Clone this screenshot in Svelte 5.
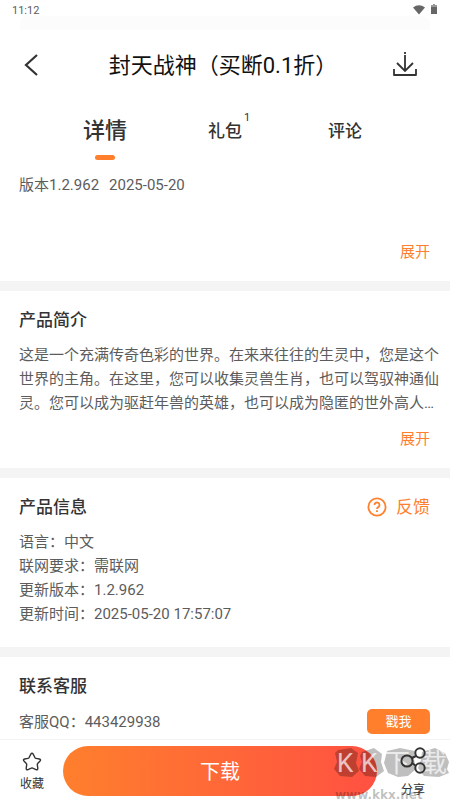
<script lang="ts">
	let activeTab = $state('detail');
	let favorite = $state(false);

	const tabs = [
		{ id: 'detail', label: '详情', count: 0 },
		{ id: 'gift', label: '礼包', count: 1 },
		{ id: 'comment', label: '评论', count: 0 }
	];

	const info = [
		{ name: '语言', value: '中文' },
		{ name: '联网要求', value: '需联网' },
		{ name: '更新版本', value: '1.2.962' },
		{ name: '更新时间', value: '2025-05-20 17:57:07' }
	];
</script>

<svelte:head>
	<title>封天战神（买断0.1折）</title>
</svelte:head>

<div class="page">
	<div class="status">
		<span>11:12</span>
		<span class="status-icons">
			<svg width="14" height="12" viewBox="0 0 14 12">
				<path d="M1 3.500Q7-1 13 3.500L7 10.500Z" fill="#666" />
			</svg>
			<svg width="8" height="12" viewBox="0 0 8 12">
				<path d="M1 3h6v7H1z" fill="#666" />
				<path d="M3 0h2v1h2v2H1V1h2z" fill="#999" />
			</svg>
		</span>
	</div>
	<div class="strip"></div>

	<header>
		<button class="icon-btn" aria-label="返回">
			<svg width="24" height="24" viewBox="0 0 24 24" fill="none" stroke="#333" stroke-width="2.200">
				<path d="M17 2 6 12l11 10" />
			</svg>
		</button>
		<h1>封天战神（买断0.1折）</h1>
		<button class="icon-btn" aria-label="下载管理">
			<svg width="26" height="26" viewBox="0 0 26 26" fill="none" stroke="#333" stroke-width="1.800">
				<path d="M13 0v2M13 3v16M5 11l8 8 8-8" />
				<path d="M2 17v6h22v-6" stroke-linejoin="round" />
			</svg>
		</button>
	</header>

	<nav>
		{#each tabs as tab}
			<button
				class="tab"
				class:active={activeTab === tab.id}
				onclick={() => (activeTab = tab.id)}
			>
				<span class="tab-label">
					{tab.label}
					{#if tab.count}<span class="count">{tab.count}</span>{/if}
				</span>
			</button>
		{/each}
	</nav>

	<section class="version">
		<p><span>版本1.2.962</span><span>2025-05-20</span></p>
		<button class="more">展开</button>
	</section>

	<section class="intro">
		<h2>产品简介</h2>
		<p>
			这是一个充满传奇色彩的世界。在来来往往的生灵中，您是这个世界的主角。在这里，您可以收集灵兽生肖，也可以驾驭神通仙灵。您可以成为驱赶年兽的英雄，也可以成为隐匿的世外高人…
		</p>
		<button class="more">展开</button>
	</section>

	<section class="info">
		<div class="row">
			<h2>产品信息</h2>
			<button class="feedback">
				<svg width="20" height="20" viewBox="0 0 20 20" fill="none" stroke="#ff7f2d">
					<circle cx="10" cy="10" r="8.600" stroke-width="1.800" />
					<path d="M7.500 8a2.500 2.500 0 1 1 4 2c-1 .7-1.500 1-1.500 2" stroke-width="1.800" />
					<path d="M10 13.200v1.900" stroke-width="1.900" />
				</svg>
				反馈
			</button>
		</div>
		<ul>
			{#each info as item}
				<li>{item.name}：{item.value}</li>
			{/each}
		</ul>
	</section>

	<section class="contact">
		<h2>联系客服</h2>
		<div class="row">
			<p>客服QQ：443429938</p>
			<button class="poke">戳我</button>
		</div>
	</section>

	<footer>
		<button class="action" aria-pressed={favorite} onclick={() => (favorite = !favorite)}>
			<svg width="20" height="20" viewBox="0 0 20 20" fill={favorite ? '#ff7f2d' : 'none'}>
				<path
					d="M8.8 2.2Q10 .4 11.2 2.2L13 5.7Q13.3 6.3 14 6.4L17.4 7Q19.3 7.5 18 9L15.7 11.5Q15.2 12 15.3 12.7L15.8 16.2Q15.9 18.4 13.9 17.6L10.8 16.2Q10 15.8 9.2 16.2L6.1 17.6Q4.1 18.4 4.2 16.2L4.7 12.7Q4.8 12 4.3 11.5L2 9Q.7 7.5 2.6 7L6 6.4Q6.7 6.3 7 5.700Z"
					stroke="#333"
					stroke-width="1.400"
				/>
			</svg>
			收藏
		</button>
		<button class="download">下载</button>
		<button class="action share">
			<svg width="28" height="28" viewBox="0 0 28 28" fill="none" stroke="#333" stroke-width="2">
				<path d="m13 11 4-2M13 16l4 3" />
				<circle cx="8" cy="14" r="5.600" />
				<circle cx="21" cy="6" r="4.700" />
				<circle cx="21" cy="21" r="4.700" />
			</svg>
			分享
		</button>
		<svg class="mark" width="117" height="55" viewBox="0 0 117 55">
			<g fill="#000" fill-opacity=".25">
				<path d="M5 4 18 2l7 5-2 10 3 8-7 6-12-1-6-7 3-7-2-9z" />
				<path d="m29 6 12-4 8 6-1 8 3 9-8 6-11-1-6-7 3-7-2-6z" />
				<path d="m54 5 13-3 15 3-1 8 2 10-8 7-10 1-10-4-4-10z" />
				<path d="m89 6 13-4 10 5 4 9-2 7 2 4-10 4-15-1-6-8 3-8z" />
			</g>
			<g class="mark-name">
				<text x="4" y="26">K</text>
				<text x="28" y="26">K</text>
				<text x="51" y="26">下</text>
				<text x="88" y="26">载</text>
			</g>
			<text class="mark-url" x="2" y="53">www.kkx.net</text>
		</svg>
	</footer>
</div>

<style>
	:global(body) {
		margin: 0;
		background: #fff;
	}

	.page {
		font-family: Roboto, 'Noto Sans CJK SC', sans-serif;
		font-size: 15px;
		line-height: 24px;
		color: #5c5c5c;
		min-height: 100vh;
		display: flex;
		flex-direction: column;
	}

	button {
		font: inherit;
		color: inherit;
		border: none;
		background: none;
		padding: 0;
		cursor: pointer;
	}

	h1,
	h2,
	p,
	ul {
		margin: 0;
		padding: 0;
		font-weight: 400;
	}

	svg {
		display: block;
		flex-shrink: 0;
	}

	.status {
		display: flex;
		justify-content: space-between;
		padding: 4px 12px 0;
		height: 12px;
		font-size: 11px;
		line-height: 13px;
	}

	.status-icons {
		display: flex;
		gap: 4px;
	}

	.strip {
		height: 14px;
		margin: 0 20px;
		border-radius: 8px 8px 0 0;
		background: #fcfcfc;
	}

	header {
		display: grid;
		grid-template-columns: 26px 1fr 26px;
		align-items: center;
		height: 70px;
		padding: 0 32px 0 20px;
	}

	h1 {
		padding: 2px 0 0 8px;
		font-size: 22px;
		line-height: 32px;
		text-align: center;
		color: #111;
	}

	nav {
		display: grid;
		grid-template-columns: repeat(3, 1fr);
		height: 60px;
		padding: 0 45px;
	}

	.tab {
		display: flex;
		flex-direction: column;
		align-items: center;
		font-size: 17px;
		font-weight: 500;
		line-height: 62px;
		color: #333;
	}

	.active {
		font-size: 22px;
	}

	.active::after {
		content: '';
		width: 20px;
		height: 5px;
		margin-top: -7px;
		border-radius: 3px;
		background: #ff7f2d;
		flex-shrink: 0;
	}

	.tab-label {
		position: relative;
	}

	.count {
		position: absolute;
		left: 100%;
		top: 12px;
		margin-left: 2px;
		font-size: 11px;
		font-weight: 400;
		line-height: 12px;
	}

	section {
		padding: 17px 20px 17px 19px;
		border-bottom: 10px solid #f4f4f4;
	}

	h2 {
		font-size: 17px;
		font-weight: 500;
		line-height: 24px;
		color: #333;
	}

	.row {
		display: flex;
		align-items: center;
		justify-content: space-between;
	}

	.more {
		display: block;
		margin-left: auto;
		color: #ff7f2d;
	}

	.version {
		padding-top: 13px;
	}

	.version p {
		display: flex;
		gap: 10px;
		margin-bottom: 43px;
	}

	.intro {
		padding-right: 10px;
	}

	.intro p {
		margin: 11px 0 12px;
	}

	.intro .more {
		margin-right: 10px;
	}

	.feedback {
		display: flex;
		align-items: center;
		gap: 9px;
		font-size: 17px;
		color: #ff7f2d;
	}

	ul {
		list-style: none;
		margin: 11px 0 4px;
	}

	.contact {
		border-bottom: none;
		padding-bottom: 4px;
	}

	.contact .row {
		margin-top: 11px;
	}

	.poke {
		width: 63px;
		border-radius: 5px;
		background: #ff7f2d;
		color: #fff;
		font-size: 13px;
		line-height: 25px;
	}

	footer {
		position: sticky;
		bottom: 0;
		display: flex;
		align-items: flex-start;
		margin-top: auto;
		padding: 6px 20px 1px;
		border-top: 1px solid #f4f4f4;
		background: #fff;
	}

	.action {
		display: flex;
		flex-direction: column;
		align-items: center;
		width: 24px;
		padding-top: 6px;
		font-size: 12px;
		line-height: 25px;
		white-space: nowrap;
		color: #333;
	}

	.share {
		width: 34px;
		padding-top: 1px;
		gap: 5px;
		line-height: 20px;
		z-index: 1;
	}

	.download {
		flex: 1;
		margin: 0 19px;
		height: 50px;
		border-radius: 25px;
		background: linear-gradient(90deg, #ff7f2d, #ff5142);
		color: #fff;
		font-size: 20px;
		line-height: 52px;
	}

	.mark {
		position: absolute;
		right: 0;
		bottom: 0;
		pointer-events: none;
	}

	.mark-name {
		font-size: 26px;
		fill: #fff;
		fill-opacity: 0.7;
	}

	.mark-url {
		font-family: 'DejaVu Sans', sans-serif;
		font-size: 12px;
		font-weight: 700;
		fill: #000;
		fill-opacity: 0.25;
	}
</style>
